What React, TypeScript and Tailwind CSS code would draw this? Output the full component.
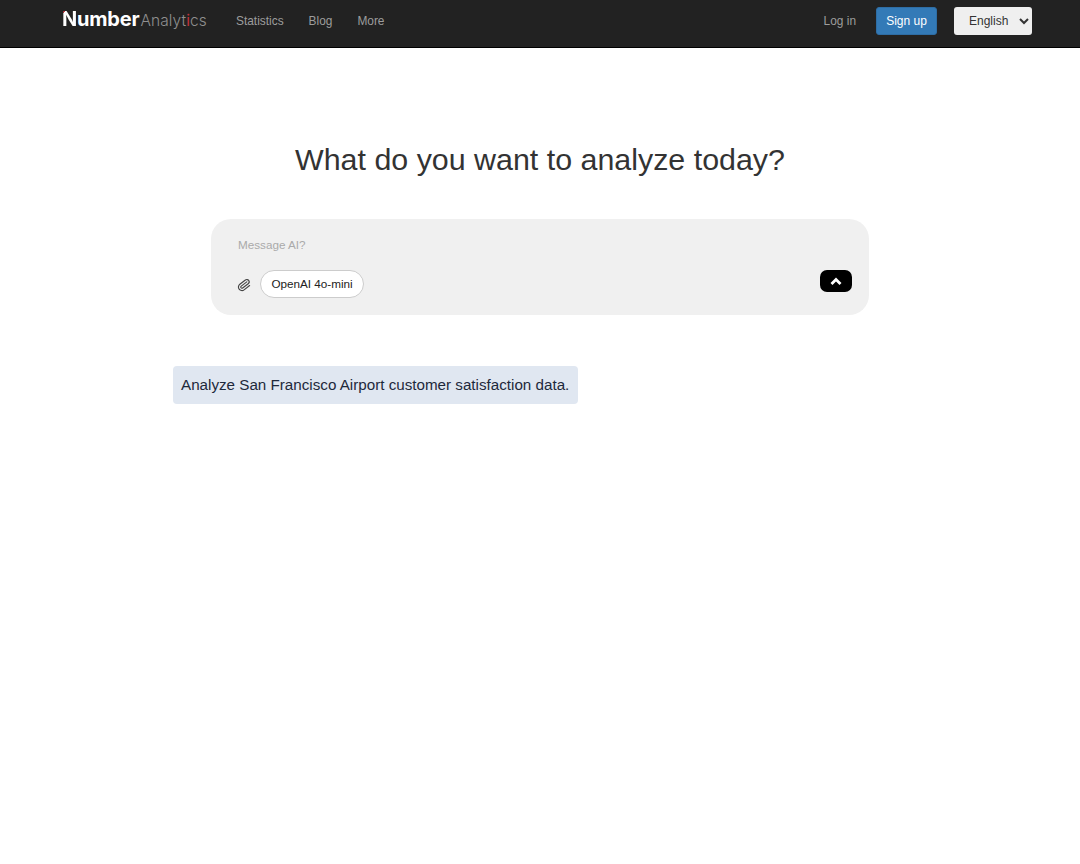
import { Paperclip } from 'lucide-react';

const navLinks = ['Statistics', 'Blog', 'More'];

function App() {
  return (
    <div className="min-h-[864px] bg-white font-['Liberation_Sans',sans-serif]">
      {/* Navbar */}
      <nav className="flex h-12 items-center border-b border-black bg-[#222222] pl-[62px] pr-[48px]">
        <a className="mb-[9px] flex w-[145px] items-baseline whitespace-nowrap font-['Inter',sans-serif]">
          <span className="text-[20px] font-bold tracking-[-0.2px] text-white">
            <span className="bg-[linear-gradient(135deg,#c8323c_18%,#ffffff_18%)] bg-clip-text text-transparent">N</span>
            umber
          </span>
          <span className="ml-px text-[15.5px] font-light tracking-[0.1px] text-[#8f8f8f]">
            Analyt<span className="font-normal text-[#c0323c]">i</span>cs
          </span>
        </a>
        <div className="ml-[29px] flex gap-[25px] pb-1 text-[11.9px] text-[#9d9d9d]">
          {navLinks.map((link) => (
            <a key={link}>{link}</a>
          ))}
        </div>
        <div className="ml-auto flex items-center pb-[6px]">
          <a className="pt-[2px] text-[11.9px] text-[#9d9d9d]">Log in</a>
          <button className="ml-5 h-7 w-[61px] rounded-[3px] border border-[#2e6da4] bg-[#337ab7] text-xs text-white">
            Sign up
          </button>
          <select className="ml-[17px] h-7 w-[78px] rounded-[3px] bg-[#efefef] pl-[11px] text-xs text-[#333333]">
            <option>English</option>
          </select>
        </div>
      </nav>

      {/* Prompt */}
      <main className="flex flex-col items-center">
        <h1 className="mt-[91px] text-[30.4px] leading-10 text-[#333333]">What do you want to analyze today?</h1>
        <div className="mt-10 flex h-24 w-[658px] flex-col rounded-[20px] bg-[#f0f0f0] pb-[17px] pl-[27px] pr-[17px] pt-[19px]">
          <p className="text-[11.7px] leading-[14px] text-[#aaaaaa]">Message AI?</p>
          <div className="mt-[18px] flex items-start">
            <Paperclip className="-ml-px mt-2 h-[14px] w-[14px] rotate-[8deg] text-[#444444]" strokeWidth={2} />
            <span className="ml-[9px] flex h-7 w-[104px] items-center justify-center rounded-full border border-[#cccccc] bg-white text-[11.7px] text-[#222222]">
              OpenAI 4o-mini
            </span>
            <button className="ml-auto flex h-[22px] w-8 items-center justify-center rounded-[7px] bg-black text-white">
              <svg className="h-2 w-3" viewBox="0 0 12 8" fill="none" stroke="currentColor" strokeWidth="2.8">
                <path d="M1.5 7 L6 2.5 L10.5 7" />
              </svg>
            </button>
          </div>
        </div>
      </main>

      {/* Suggestion */}
      <div className="mt-[51px] pl-[173px]">
        <div className="inline-block rounded bg-[#e0e7f1] py-[9px] pl-2 pr-[9px] text-[15.2px] leading-5 text-[#1e293b]">
          Analyze San Francisco Airport customer satisfaction data.
        </div>
      </div>
    </div>
  );
}

export default App;
